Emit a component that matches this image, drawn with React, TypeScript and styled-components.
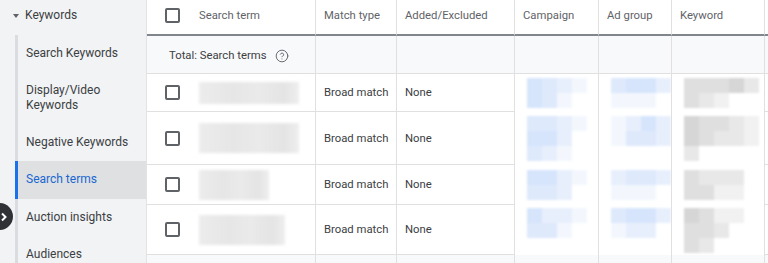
import React from 'react';
import styled, { createGlobalStyle } from 'styled-components';
import { CircleHelp } from 'lucide-react';

const GlobalStyle = createGlobalStyle`
    html, body {
        margin: 0;
        padding: 0;
        width: 768px;
        height: 263px;
        overflow: hidden;
        background: #ffffff;
        font-family: Roboto, 'Liberation Sans', sans-serif;
    }
`

const Page = styled.div`
    position: relative;
    display: flex;
    width: 768px;
    height: 263px;
    overflow: hidden;
`

// menu lateral
const Sidebar = styled.nav`
    width: 146px;
    flex-shrink: 0;
    background: #f1f3f4;
    border-right: 1px solid #e3e3e3;
    color: #3c4043;
    font-size: 12px;
`

const GroupTitle = styled.div`
    height: 30px;
    display: flex;
    align-items: center;
    padding-left: 13px;
    gap: 6px;
`

const Caret = styled.span`
    width: 0;
    height: 0;
    border-left: 3px solid transparent;
    border-right: 3px solid transparent;
    border-top: 4px solid #5f6368;
    margin-top: 1px;
`

const SubList = styled.ul`
    list-style: none;
    margin: 5px 0 0 15px;
    padding: 0;
    border-left: 3px solid #dadce0;
`

const SubItem = styled.li<{ $active?: boolean; $tall?: boolean }>`
    height: ${p => (p.$tall ? '51px' : '37.5px')};
    display: flex;
    align-items: center;
    padding-left: 8px;
    margin-left: -3px;
    border-left: 3px solid ${p => (p.$active ? '#1a73e8' : 'transparent')};
    background: ${p => (p.$active ? '#dfe0e1' : 'transparent')};
    color: ${p => (p.$active ? '#1967d2' : '#3c4043')};
    line-height: 15px;
`

const ToggleButton = styled.div`
    position: absolute;
    left: -14px;
    top: 203px;
    width: 27px;
    height: 27px;
    border-radius: 50%;
    background: #303134;
    display: flex;
    align-items: center;
    justify-content: flex-end;
    padding-right: 4px;
    box-sizing: border-box;
`

// tabela
const Table = styled.div`
    flex: 1;
    display: grid;
    grid-template-columns: 168px 81px 118px 84px 73px 93px 1fr;
    grid-template-rows: 36px 38px 38px 53px 40px 50px 20px;
    font-size: 11.3px;
    color: #3c4043;
`

const Cell = styled.div<{ $head?: boolean; $total?: boolean; $line?: boolean; $noBottom?: boolean }>`
    display: flex;
    align-items: center;
    gap: 19px;
    padding-left: ${p => (p.$line ? '8px' : '18px')};
    padding-bottom: ${p => (p.$head ? '4px' : '0')};
    box-sizing: border-box;
    overflow: hidden;
    white-space: nowrap;
    color: ${p => (p.$head ? '#5f6368' : '#3c4043')};
    background: ${p => (p.$total ? '#f8f9fa' : '#ffffff')};
    border-left: ${p => (p.$line ? '1px solid #e0e0e0' : 'none')};
    border-bottom: ${p => (p.$head ? '2px solid #80868b' : p.$noBottom ? 'none' : '1px solid #e0e0e0')};
`

const TotalLabel = styled.span`
    display: flex;
    align-items: center;
    gap: 8px;
    margin: 2px 0 0 4px;
    color: #3c4043;
`

const Checkbox = styled.span`
    width: 15px;
    height: 15px;
    box-sizing: border-box;
    border: 2px solid #5f6368;
    border-radius: 2px;
    flex-shrink: 0;
`

const Blur = styled.div<{ $w: number; $h: number }>`
    width: ${p => p.$w}px;
    height: ${p => p.$h}px;
    background: linear-gradient(90deg, #ececec 0%, #e6e6e6 35%, #eaeaea 60%, #e4e4e4 85%, #eeeeee 100%);
    filter: blur(1.5px);
`

const Mosaic = styled.div<{ $cols: number }>`
    display: grid;
    grid-template-columns: repeat(${p => p.$cols}, 15px);
    grid-auto-rows: 15px;
    margin-left: 4px;
    filter: blur(1px);
`

const Tile = styled.div<{ $c: string }>`
    background: ${p => p.$c};
`

const blue = ['#d6e5fc', '#dee9fc', '#e8effc', '#f3f7fd', '#ffffff'];
const gray = ['#d6d6d6', '#dfdfdf', '#e8e8e8', '#f1f1f1', '#ffffff'];

function Pixels({ pattern, palette }: { pattern: string[]; palette: string[] }) {
    return (
        <Mosaic $cols={pattern[0].length}>
            {pattern.flatMap((row, r) =>
                row.split('').map((ch, c) => <Tile key={r + '-' + c} $c={palette[Number(ch)]} />)
            )}
        </Mosaic>
    );
}

const rows = [
    {
        term: [100, 22],
        camp: ['0123', '0134'],
        group: ['1002', '3334'],
        kw: ['11102', '12344'],
    },
    {
        term: [100, 30],
        camp: ['1123', '0024', '1234'],
        group: ['3202', '3112', '4444'],
        kw: ['01123', '01223', '24444'],
    },
    {
        term: [70, 30],
        camp: ['0023', '1124'],
        group: ['2112', '3334'],
        kw: ['12224', '11334'],
    },
    {
        term: [86, 30],
        camp: ['0223', '1134', '4444'],
        group: ['1002', '3224', '4444'],
        kw: ['01334', '11244', '12444'],
    },
];

export default function App() {
    return (
        <Page>
            <GlobalStyle />
            <Sidebar>
                <GroupTitle>
                    <Caret />
                    Keywords
                </GroupTitle>
                <SubList>
                    <SubItem>Search Keywords</SubItem>
                    <SubItem $tall>Display/Video<br />Keywords</SubItem>
                    <SubItem>Negative Keywords</SubItem>
                    <SubItem $active>Search terms</SubItem>
                    <SubItem>Auction insights</SubItem>
                    <SubItem>Audiences</SubItem>
                </SubList>
            </Sidebar>

            <ToggleButton>
                <svg width="10" height="10" viewBox="0 0 10 10">
                    <path d="M3 1.5 L6.5 5 L3 8.5" fill="none" stroke="#fff" strokeWidth="2" />
                </svg>
            </ToggleButton>

            <Table>
                <Cell $head><Checkbox />Search term</Cell>
                <Cell $head $line>Match type</Cell>
                <Cell $head $line>Added/Excluded</Cell>
                <Cell $head $line>Campaign</Cell>
                <Cell $head $line>Ad group</Cell>
                <Cell $head $line>Keyword</Cell>
                <Cell $head $line />

                <Cell $total>
                    <TotalLabel>
                        Total: Search terms
                        <CircleHelp size={14} color="#5f6368" strokeWidth={1.6} />
                    </TotalLabel>
                </Cell>
                <Cell $total $line />
                <Cell $total $line />
                <Cell $total $line />
                <Cell $total $line />
                <Cell $total $line />
                <Cell $total $line />

                {rows.map((r, i) => (
                    <React.Fragment key={i}>
                        <Cell>
                            <Checkbox />
                            <Blur $w={r.term[0]} $h={r.term[1]} />
                        </Cell>
                        <Cell $line>Broad match</Cell>
                        <Cell $line>None</Cell>
                        <Cell $line $noBottom>
                            <Pixels pattern={r.camp} palette={blue} />
                        </Cell>
                        <Cell $line $noBottom>
                            <Pixels pattern={r.group} palette={blue} />
                        </Cell>
                        <Cell $line $noBottom>
                            <Pixels pattern={r.kw} palette={gray} />
                        </Cell>
                        <Cell $line />
                    </React.Fragment>
                ))}

                <Cell $total />
                <Cell $total $line />
                <Cell $total $line />
                <Cell $total $line />
                <Cell $total $line />
                <Cell $total $line />
                <Cell $total $line />
            </Table>
        </Page>
    );
}
